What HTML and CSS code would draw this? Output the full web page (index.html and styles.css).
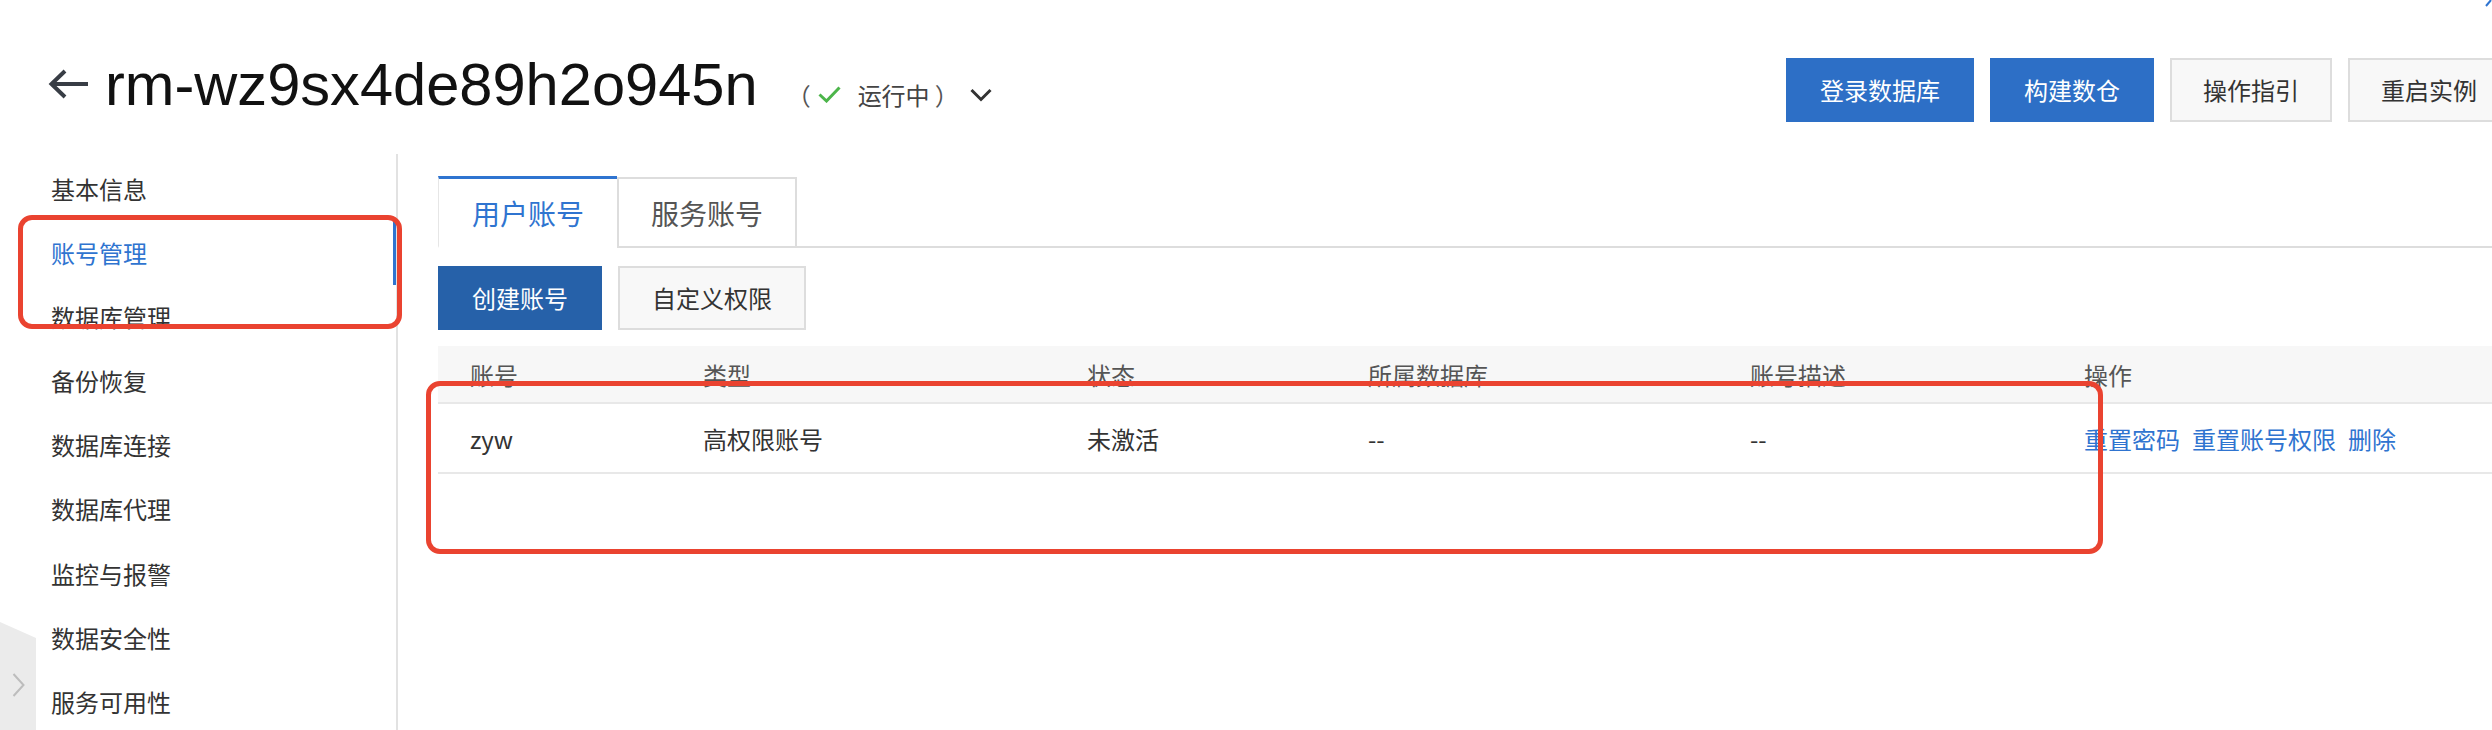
FILE: index.html
```html
<!DOCTYPE html>
<html lang="zh-CN">
<head>
<meta charset="utf-8">
<title>rm-wz9sx4de89h2o945n</title>
<link rel="stylesheet" href="styles.css">
</head>
<body>
<div class="page">
  <header class="top">
    <svg class="back" width="40" height="32" viewBox="0 0 40 32"><path d="M40 16H4M17 3L3.5 16L17 29" fill="none" stroke="#383d45" stroke-width="4"/></svg>
    <div class="title-group">
      <h1 class="title">rm-wz9sx4de89h2o945n</h1>
      <div class="status">
        <span class="paren">（</span>
        <svg class="check" width="23" height="17" viewBox="0 0 23 17"><path d="M1.5 8.5L8.5 15L21.5 1.5" fill="none" stroke="#4cb54a" stroke-width="3"/></svg>
        <span class="status-text">运行中</span>
        <span class="paren paren-r">）</span>
        <svg class="chev" width="22" height="14" viewBox="0 0 22 14"><path d="M1.5 2L11 11.5L20.5 2" fill="none" stroke="#333" stroke-width="3"/></svg>
      </div>
    </div>
    <div class="actions">
      <button class="btn btn-primary">登录数据库</button>
      <button class="btn btn-primary">构建数仓</button>
      <button class="btn btn-default">操作指引</button>
      <button class="btn btn-default">重启实例</button>
    </div>
  </header>

  <div class="layout">
    <nav class="sidebar">
      <div class="nav-item">基本信息</div>
      <div class="nav-item active">账号管理</div>
      <div class="nav-item">数据库管理</div>
      <div class="nav-item">备份恢复</div>
      <div class="nav-item">数据库连接</div>
      <div class="nav-item">数据库代理</div>
      <div class="nav-item">监控与报警</div>
      <div class="nav-item">数据安全性</div>
      <div class="nav-item">服务可用性</div>
    </nav>

    <main class="content">
      <div class="tabs">
        <div class="tab tab-active">用户账号</div>
        <div class="tab">服务账号</div>
      </div>

      <div class="toolbar">
        <button class="btn btn-dark">创建账号</button>
        <button class="btn btn-default btn-wide">自定义权限</button>
      </div>

      <div class="table">
        <div class="row thead">
          <div class="cell">账号</div>
          <div class="cell">类型</div>
          <div class="cell">状态</div>
          <div class="cell">所属数据库</div>
          <div class="cell">账号描述</div>
          <div class="cell">操作</div>
        </div>
        <div class="row tbody">
          <div class="cell">zyw</div>
          <div class="cell">高权限账号</div>
          <div class="cell">未激活</div>
          <div class="cell">--</div>
          <div class="cell">--</div>
          <div class="cell ops"><a class="link">重置密码</a><a class="link">重置账号权限</a><a class="link">删除</a></div>
        </div>
      </div>
    </main>
  </div>

  <div class="mark mark-nav"></div>
  <div class="mark mark-table"></div>

  <div class="collapse">
    <svg class="collapse-chev" width="13" height="24" viewBox="0 0 13 24"><path d="M1.5 1L11.5 12L1.5 23" fill="none" stroke="#bdbdbd" stroke-width="2"/></svg>
  </div>

  <svg class="corner" width="16" height="8" viewBox="0 0 16 8"><path d="M15 0L10 6" fill="none" stroke="#2f74d0" stroke-width="2"/></svg>
</div>
</body>
</html>
```

FILE: styles.css
```css
html, body {
  margin: 0;
  padding: 0;
  overflow: hidden;
  background: #fff;
}

body {
  font-family: "Liberation Sans", "Noto Sans CJK SC", sans-serif;
  color: #333;
}

.page {
  position: relative;
  width: 2510px;
  height: 730px;
}

/* ---------- header ---------- */
.top {
  display: flex;
  align-items: center;
  height: 64px;
  padding: 58px 0 0 48px;
  margin-bottom: 32px;
}

.back {
  display: block;
  margin-right: 17px;
  margin-bottom: 12px;
}

.title-group {
  display: flex;
  align-items: baseline;
  margin-bottom: 10px;
}

.title {
  margin: 0;
  font-size: 59.6px;
  line-height: 66px;
  font-weight: 400;
  color: #111;
}

.status {
  display: flex;
  align-items: center;
  margin-left: 29px;
  font-size: 24px;
  color: #444;
  font-family: "Noto Sans CJK SC", sans-serif;
}

.paren {
  color: #555;
}

.check {
  display: block;
  margin-left: 7px;
  margin-right: 17px;
}

.status-text {
  color: #444;
}

.paren-r {
  margin-left: 5px;
}

.chev {
  display: block;
  margin-left: 11px;
}

.actions {
  display: flex;
  gap: 16px;
  margin-left: auto;
}

.btn {
  font-family: "Noto Sans CJK SC", sans-serif;
  font-size: 24px;
  height: 64px;
  line-height: 60px;
  padding: 0 34px;
  border: 0;
  border-radius: 0;
  cursor: pointer;
  box-sizing: border-box;
}

.btn-primary {
  background: #2d6fc6;
  color: #fff;
}

.btn-dark {
  background: #2661a9;
  color: #fff;
}

.btn-default {
  background: #f8f8f8;
  color: #333;
  border: 2px solid #dddddd;
  padding: 0 31px;
}

.btn-wide {
  padding: 0 32px;
}

/* ---------- layout ---------- */
.layout {
  display: flex;
  align-items: stretch;
}

.sidebar {
  width: 396px;
  height: 573px;
  border-right: 2px solid #e2e2e2;
  padding-top: 3px;
  box-sizing: content-box;
}

.nav-item {
  height: 64.1px;
  line-height: 64.1px;
  padding-left: 51px;
  font-size: 24px;
  color: #333;
  font-family: "Noto Sans CJK SC", sans-serif;
}

.nav-item.active {
  color: #2f74d0;
  box-shadow: inset -3px 0 0 #2f74d0;
}

.content {
  flex: 1;
  padding: 21px 0 0 40px;
}

/* ---------- tabs ---------- */
.tabs {
  display: flex;
  align-items: flex-end;
  border-bottom: 2px solid #dddddd;
  height: 71px;
}

.tab {
  box-sizing: border-box;
  height: 71px;
  margin-bottom: -2px;
  font-size: 28px;
  font-family: "Noto Sans CJK SC", sans-serif;
  color: #555;
  display: flex;
  align-items: center;
  justify-content: center;
  width: 180px;
  border: 2px solid #dddddd;
}

.tab-active {
  width: 179px;
  height: 72px;
  color: #2f74d0;
  border: 0;
  border-top: 3px solid #2f74d0;
  border-left: 1px solid #e6e6e6;
  border-bottom: 2px solid #fff;
}

/* ---------- toolbar ---------- */
.toolbar {
  display: flex;
  gap: 16px;
  margin-top: 18px;
}

/* ---------- table ---------- */
.table {
  margin-top: 16px;
}

.row {
  display: grid;
  grid-template-columns: 233px 384px 281px 382px 334px 1fr;
  border-bottom: 2px solid #e8e8e8;
  font-family: "Noto Sans CJK SC", sans-serif;
  font-size: 24px;
}

.thead {
  height: 56px;
  background: #f7f7f7;
  color: #555;
}

.tbody {
  height: 68px;
  color: #333;
}

.cell {
  display: flex;
  align-items: center;
  padding-left: 32px;
}

.ops {
  gap: 12px;
}

.link {
  color: #2f74d0;
  cursor: pointer;
}

/* ---------- annotations / overlays ---------- */
.mark {
  position: absolute;
  border: 5px solid #ea4330;
  border-radius: 14px;
  box-sizing: border-box;
  pointer-events: none;
}

.mark-nav {
  left: 18px;
  top: 215px;
  width: 384px;
  height: 114px;
}

.mark-table {
  left: 426px;
  top: 381px;
  width: 1677px;
  height: 173px;
}

.collapse {
  position: absolute;
  left: 0;
  top: 622px;
  width: 36px;
  height: 108px;
  background: #ebebeb;
  clip-path: polygon(0 0, 100% 16px, 100% 100%, 0 100%);
}

.collapse-chev {
  display: block;
  margin: 51px 0 0 12px;
}

.corner {
  position: absolute;
  left: 2476px;
  top: 0;
}
```
